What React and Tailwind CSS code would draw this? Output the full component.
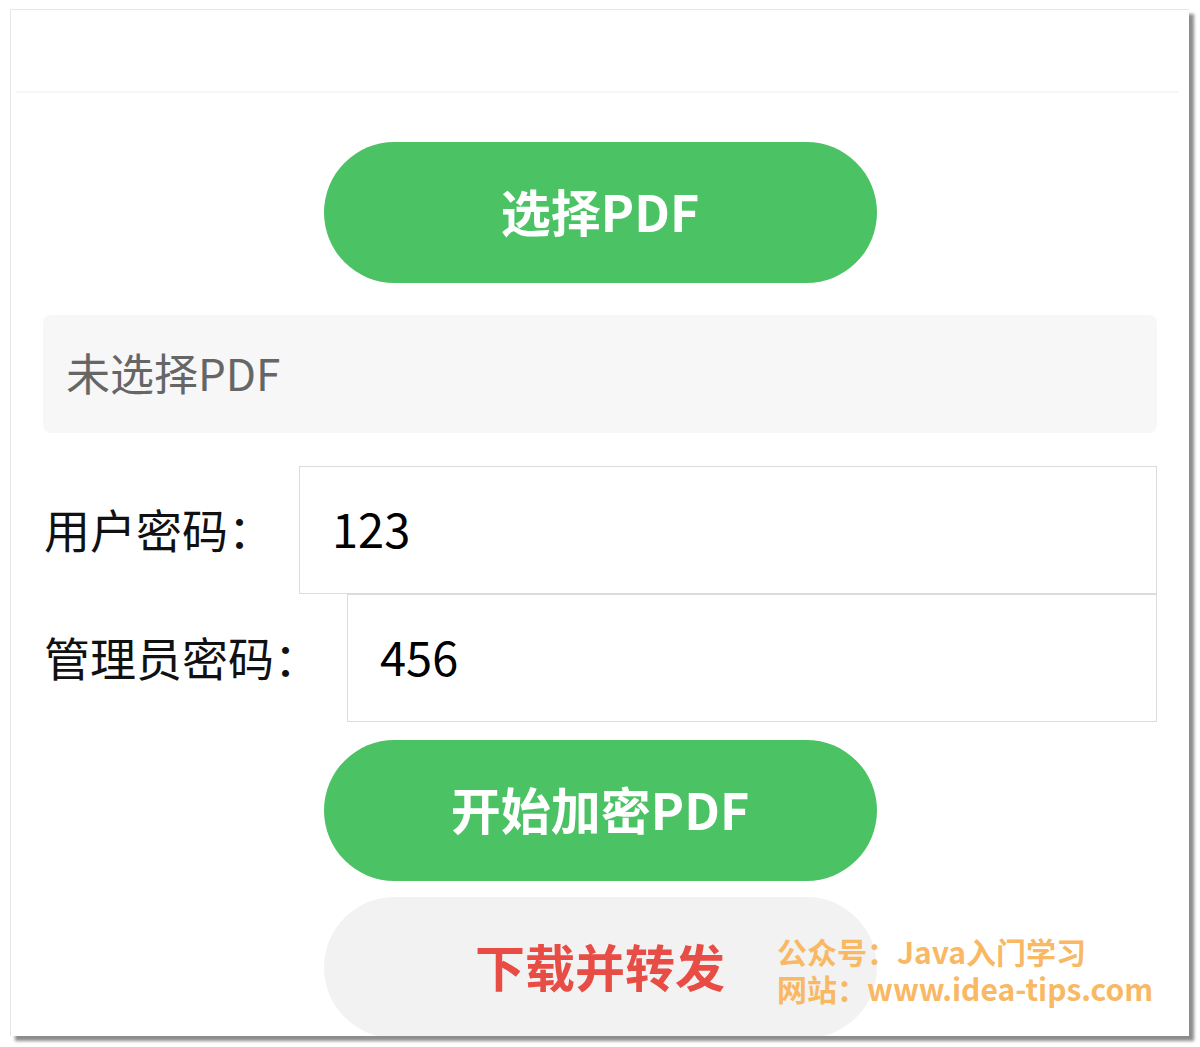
import React from 'react'

const cjk = "font-['Noto_Sans_CJK_SC','Noto_Sans',sans-serif]"

const GreenButton = ({ children, className = '' }) => (
  <button
    className={`mx-auto flex h-[141px] w-[553px] items-center justify-center rounded-full bg-[#4bc264] pb-[4px] text-[50px] font-bold text-white ${className}`}
  >
    {children}
  </button>
)

const PasswordRow = ({ label, value, labelWidth, className = '' }) => (
  <div className={`flex items-center ${className}`}>
    <span className={`shrink-0 pb-[4px] pl-[1px] text-[46px] text-[#111] ${labelWidth}`}>{label}</span>
    <div className="flex h-[128px] flex-1 items-center border border-[#dcdcdc] bg-white px-[32px] pb-[4px] text-[47px] text-black">
      {value}
    </div>
  </div>
)

export default function App() {
  return (
    <div className={`min-h-screen bg-white pl-[10px] pt-[9px] ${cjk}`}>
      <div className="relative h-[1027px] w-[1179px] overflow-hidden border-l border-t border-[#e6e6e6] bg-white shadow-[5px_5px_3px_rgba(0,0,0,0.45)]">
        <div className="ml-[5px] mr-[11px] h-[83px] border-b-2 border-[#f6f6f6]" />

        <div className="px-[32px]">
          <GreenButton className="mt-[49px]">选择PDF</GreenButton>

          <div className="mt-[32px] flex h-[118px] items-center rounded-lg bg-[#f7f7f7] pb-[4px] pl-[23px] text-[44px] text-[#666]">
            未选择PDF
          </div>

          <PasswordRow className="mt-[33px]" label="用户密码：" value="123" labelWidth="w-[256px]" />
          <PasswordRow label="管理员密码：" value="456" labelWidth="w-[304px]" />

          <GreenButton className="mt-[18px]">开始加密PDF</GreenButton>

          <button className="mx-auto mt-[16px] flex h-[141px] w-[553px] items-center justify-center rounded-full bg-[#f2f2f2] pb-[4px] text-[50px] font-bold text-[#e84d45]">
            下载并转发
          </button>
        </div>

        <div className="absolute left-[766px] top-[923px] text-[30px] font-bold leading-[37px] text-[#f8b864]">
          <div>公众号：Java入门学习</div>
          <div>网站：www.idea-tips.com</div>
        </div>
      </div>
    </div>
  )
}
